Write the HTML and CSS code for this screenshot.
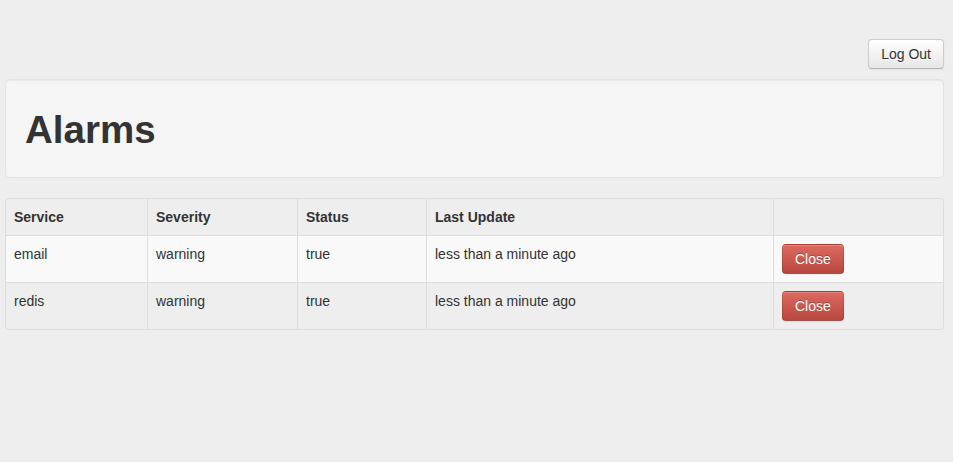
FILE: index.html
```html
<!DOCTYPE html>
<html>
<head>
<meta charset="utf-8">
<title>Alarms</title>
<link rel="stylesheet" href="styles.css">
</head>
<body>
<div class="page">
  <div class="topbar">
    <button class="btn">Log Out</button>
  </div>
  <div class="hero">
    <h1>Alarms</h1>
  </div>
  <table class="alarms">
    <thead>
      <tr><th class="c1">Service</th><th class="c2">Severity</th><th class="c3">Status</th><th class="c4">Last Update</th><th class="c5"></th></tr>
    </thead>
    <tbody>
      <tr class="odd"><td>email</td><td>warning</td><td>true</td><td>less than a minute ago</td><td><button class="btn btn-danger">Close</button></td></tr>
      <tr><td>redis</td><td>warning</td><td>true</td><td>less than a minute ago</td><td><button class="btn btn-danger">Close</button></td></tr>
    </tbody>
  </table>
</div>
</body>
</html>
```
FILE: styles.css
```css
html, body { margin: 0; padding: 0; }
body {
  background: #eeeeee;
  font-family: "Liberation Sans", Arial, Helvetica, sans-serif;
  font-size: 14px;
  line-height: 20px;
  color: #333333;
}
.page {
  padding: 39px 9px 0 5px;
}
.topbar {
  display: flex;
  justify-content: flex-end;
  margin-bottom: 10px;
}
.btn {
  display: inline-block;
  padding: 4px 12px;
  font-family: inherit;
  font-size: 14px;
  line-height: 20px;
  color: #333333;
  text-shadow: 0 1px 1px rgba(255,255,255,0.75);
  background-color: #f5f5f5;
  background-image: linear-gradient(to bottom, #ffffff, #e6e6e6);
  border: 1px solid #cccccc;
  border-bottom-color: #b3b3b3;
  border-radius: 4px;
  box-shadow: inset 0 1px 0 rgba(255,255,255,0.2), 0 1px 2px rgba(0,0,0,0.05);
  cursor: pointer;
  margin: 0;
}
.btn-danger {
  color: #ffffff;
  text-shadow: 0 -1px 0 rgba(0,0,0,0.25);
  background-color: #c9534a;
  background-image: linear-gradient(to bottom, #dd6a60, #b8473d);
  border-color: rgba(0,0,0,0.1) rgba(0,0,0,0.1) rgba(0,0,0,0.25);
}
.hero {
  background: #f5f5f5;
  border: 1px solid #e3e3e3;
  border-radius: 4px;
  box-shadow: inset 0 1px 1px rgba(0,0,0,0.05);
  height: 97px;
  display: flex;
  align-items: center;
  padding: 0 19px;
  margin-bottom: 20px;
}
.hero h1 {
  margin: 0;
  font-size: 38.5px;
  line-height: 40px;
  font-weight: bold;
  color: #333333;
  position: relative;
  top: 1px;
}
.alarms {
  width: 100%;
  border-collapse: separate;
  border-spacing: 0;
  border: 1px solid #dddddd;
  border-left: 0;
  border-radius: 4px;
}
.alarms th, .alarms td {
  padding: 8px;
  text-align: left;
  vertical-align: top;
  border-left: 1px solid #dddddd;
  border-top: 1px solid #dddddd;
  line-height: 20px;
}
.alarms thead th {
  border-top: 0;
  font-weight: bold;
}
.alarms tr > :first-child { border-left: 1px solid #dddddd; }
.alarms thead tr:first-child th:first-child { border-top-left-radius: 4px; }
.alarms tbody tr:last-child td:first-child { border-bottom-left-radius: 4px; }
.alarms tr.odd td { background: #f9f9f9; }
.c1 { width: 125px; }
.c2 { width: 133px; }
.c3 { width: 112px; }
.c4 { width: 330px; }
```
